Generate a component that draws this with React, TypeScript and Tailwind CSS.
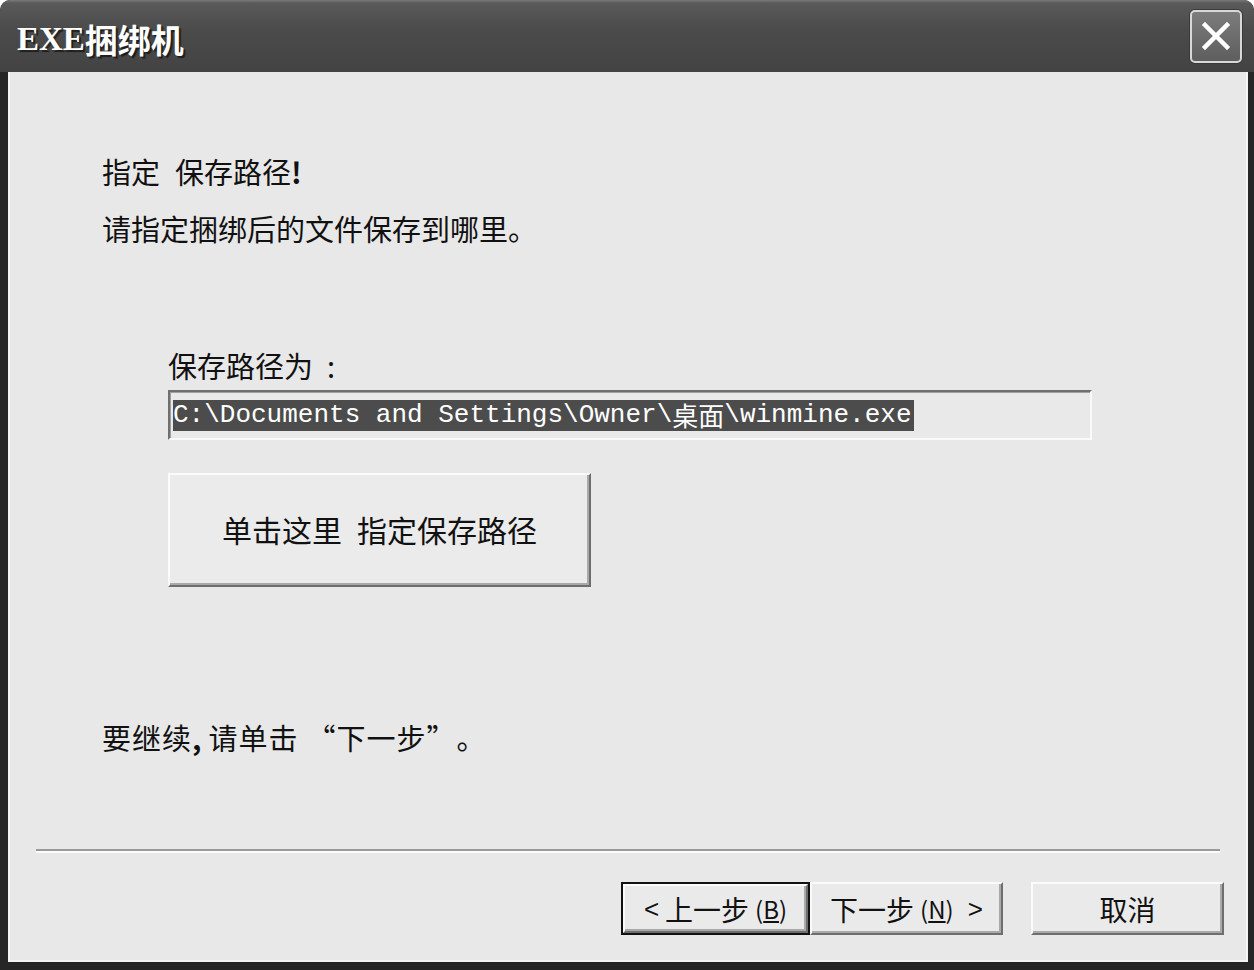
import React from 'react';

const CJK = "font-['Noto_Sans_CJK_SC','Noto_Sans',sans-serif]";

// classic raised 3D bevel
const bevel =
  'border-2 border-t-[#fbfbfb] border-l-[#fbfbfb] border-r-[#6e6e6e] border-b-[#6e6e6e] shadow-[inset_-2px_-2px_0_#a9a9a9]';

function Underlined({ ch }: { ch: string }) {
  return (
    <span className="inline-flex items-center text-[24px] leading-none">
      (<span className="underline underline-offset-2">{ch}</span>)
    </span>
  );
}

export default function App() {
  return (
    <div className={`w-[1254px] h-[970px] bg-[#262626] rounded-t-[10px] flex flex-col overflow-hidden ${CJK}`}>
      {/* Title bar */}
      <div className="h-[72px] shrink-0 flex items-center justify-between pl-[17px] pr-[12px] rounded-t-[10px] bg-[linear-gradient(to_bottom,#7a7a7a_0px,#5a5a5a_3px,#4b4b4b_40%,#434343_100%)]">
        <div className="flex items-center pt-[6px] text-white font-bold text-[33px] leading-none [text-shadow:2px_2px_1px_#1e1e1e]">
          <span className="font-['Liberation_Serif','Noto_Sans_CJK_SC',serif] font-bold">EXE</span>
          <span className={CJK}>捆绑机</span>
        </div>
        <button
          type="button"
          aria-label="Close"
          className="w-[52px] h-[53px] rounded-[5px] border-2 border-[#d8d8d8] bg-[linear-gradient(to_bottom,#7c7c7c,#5e5e5e)] flex items-center justify-center shadow-[0_0_0_1px_#3a3a3a]"
        >
          <svg width="34" height="34" viewBox="0 0 34 34">
            <path d="M6 6 L28 28 M28 6 L6 28" stroke="#fff" strokeWidth="4.5" strokeLinecap="square" />
          </svg>
        </button>
      </div>

      {/* Body */}
      <div className="flex-1 flex ml-[8px] mr-[6px] mb-[8px]">
        <div className="flex-1 flex flex-col bg-[#e8e8e8] border-l-[2px] border-b-[2px] border-r-[2px] border-l-[#f4f4f4] border-b-[#f4f4f4] border-r-[#f4f4f4] text-[#111]">
          <div className="flex flex-col pl-[92px] pt-[81px]">
            <p className="text-[29px] leading-[36px]">
              指定<span className="inline-block w-[15px]" />保存路径<span className="font-bold">!</span>
            </p>
            <p className="mt-[21px] text-[29px] leading-[36px]">请指定捆绑后的文件保存到哪里。</p>

            <div className="ml-[66px] mt-[101px] flex flex-col">
              <p className="text-[29px] leading-[36px]">
                保存路径为<span className="inline-block w-[14px]" />:
              </p>
              <div className="mt-[7px] w-[924px] h-[50px] border-2 border-t-[#6f6f6f] border-l-[#6f6f6f] border-r-[#fafafa] border-b-[#fafafa] bg-[#e9e9e9] shadow-[inset_1px_1px_0_#a0a0a0] flex items-center pl-[3px]">
                <span className="bg-[#4c4c4c] text-white h-[31px] flex items-center pr-[2px] font-['Liberation_Mono','Noto_Sans_CJK_SC',monospace] text-[26px] leading-none whitespace-pre">
                  C:\Documents and Settings\Owner\<span className={CJK}>桌面</span>\winmine.exe
                </span>
              </div>

              <button
                type="button"
                className={`mt-[33px] w-[423px] h-[114px] bg-[#ebebeb] ${bevel} text-[30px] flex items-center justify-center pb-[2px]`}
              >
                单击这里<span className="inline-block w-[15px]" />指定保存路径
              </button>
            </div>

            <p className="mt-[132px] text-[29px] leading-[36px] tracking-[1px]">
              要继续<span className="font-bold">,</span>
              <span className="inline-block w-[6px]" />请单击
              <span className="inline-block w-[38px] text-right">“</span>下一步
              <span className="inline-block w-[30px] text-left">”</span>
              <span className="inline-block w-[30px] text-center">。</span>
            </p>
          </div>

          <div className="mt-[94px] mx-[26px] h-[4px] border-t-2 border-t-[#9a9a9a] border-b-2 border-b-[#fbfbfb]" />

          <div className="mt-[29px] flex justify-end pr-[22px]">
            <div className="flex">
              <div className="w-[189px] h-[53px] border-2 border-[#111]">
                <button
                  type="button"
                  className={`w-full h-full bg-[#eaeaea] ${bevel} text-[28px] leading-none flex items-center justify-center gap-[6px]`}
                >
                  <span className="font-['Liberation_Sans',sans-serif] text-[26px] font-light">&lt;</span>
                  <span>上一步</span>
                  <Underlined ch="B" />
                </button>
              </div>
              <button
                type="button"
                className={`w-[193px] h-[53px] bg-[#eaeaea] ${bevel} text-[28px] leading-none flex items-center justify-center gap-[6px]`}
              >
                <span>下一步</span>
                <Underlined ch="N" />
                <span className="ml-[8px] font-['Liberation_Sans',sans-serif] text-[26px] font-light">&gt;</span>
              </button>
            </div>
            <button
              type="button"
              className={`ml-[28px] w-[193px] h-[53px] bg-[#eaeaea] ${bevel} text-[28px] leading-none flex items-center justify-center`}
            >
              取消
            </button>
          </div>
        </div>
      </div>
    </div>
  );
}
